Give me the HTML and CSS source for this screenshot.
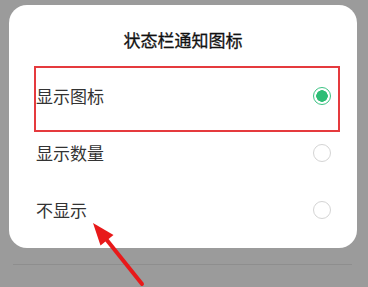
FILE: index.html
```html
<!DOCTYPE html>
<html lang="zh">
<head>
<meta charset="utf-8">
<link rel="stylesheet" href="styles.css">
</head>
<body>
<div class="card">
  <div class="title">状态栏通知图标</div>
  <div class="option"><span class="label">显示图标</span><span class="radio checked"></span></div>
  <div class="option"><span class="label">显示数量</span><span class="radio"></span></div>
  <div class="option"><span class="label">不显示</span><span class="radio"></span></div>
</div>
<div class="divider"></div>
<div class="highlight"></div>
<svg class="arrow" width="368" height="287" viewBox="0 0 368 287">
  <line x1="142" y1="284" x2="106" y2="239" stroke="#e8191a" stroke-width="4" stroke-linecap="round"/>
  <polygon points="93,223 113.5,235 100.5,245.5" fill="#e8191a"/>
</svg>
</body>
</html>
```
FILE: styles.css
```css
html, body {
  margin: 0;
  padding: 0;
}
body {
  width: 368px;
  height: 287px;
  background: #9b9b9b;
  position: relative;
  overflow: hidden;
  font-family: "Noto Sans CJK SC", "Noto Sans", sans-serif;
}
.card {
  margin: 5px 0 0 9px;
  width: 348px;
  box-sizing: border-box;
  background: #fff;
  border-radius: 18px;
  padding-bottom: 10px;
}
.title {
  padding-top: 25px;
  height: 37px;
  box-sizing: content-box;
  line-height: 20px;
  font-size: 17px;
  text-align: center;
  color: #111;
  font-weight: 400;
  -webkit-text-stroke: 0.3px #111;
}
.option {
  height: 57px;
  display: flex;
  align-items: center;
  justify-content: space-between;
  padding: 0 26px 0 27px;
}
.label {
  font-size: 17px;
  color: #333;
  line-height: 20px;
}
.radio {
  width: 18px;
  height: 18px;
  box-sizing: border-box;
  border-radius: 50%;
  border: 1.5px solid #d4d4d4;
  background: #fff;
}
.radio.checked {
  border: 1.5px solid #3cc383;
  background: radial-gradient(circle, #2ebd76 0 5.5px, #fff 6px);
}
.divider {
  margin: 16px 0 0 13px;
  width: 339px;
  height: 1px;
  background: #8e8e8e;
}
.highlight {
  position: absolute;
  left: 34px;
  top: 66px;
  width: 306px;
  height: 66px;
  box-sizing: border-box;
  border: 2px solid #e53a3e;
}
.arrow {
  position: absolute;
  left: 0;
  top: 0;
}
```
